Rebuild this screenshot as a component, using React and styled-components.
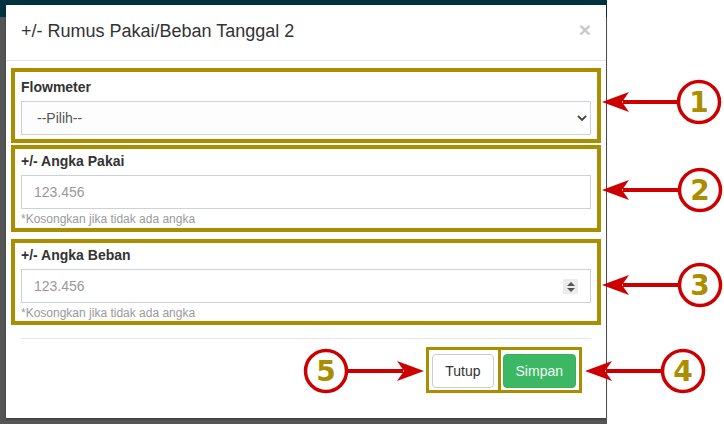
import React from "react";
import styled, { createGlobalStyle } from "styled-components";

const GlobalStyle = createGlobalStyle`
  html, body { margin: 0; padding: 0; background: #fff; }
  body {
    font-family: "Liberation Sans", Arial, sans-serif;
    font-size: 14px;
    color: #333;
  }
  * { box-sizing: border-box; }
`;

const Canvas = styled.div`
  position: relative;
  width: 724px;
  height: 424px;
  display: flex;
  overflow: hidden;
  background: #fff;
`;

const Backdrop = styled.div`
  width: 607px;
  height: 424px;
  padding: 5px 1px 0 6px;
  background: linear-gradient(#02323f 0 17px, #555 17px);
`;

const Modal = styled.div`
  width: 600px;
  height: 413px;
  background: #fff;
  display: flex;
  flex-direction: column;
  box-shadow: 0 1px 2px rgba(0, 0, 0, 0.35);
`;

const Header = styled.div`
  display: flex;
  align-items: flex-start;
  justify-content: space-between;
  padding: 14px 15px 16px;
  border-bottom: 1px solid #e5e5e5;
`;

const Title = styled.h4`
  margin: 0;
  font-size: 18px;
  line-height: 25px;
  font-weight: 400;
  color: #333;
`;

const Close = styled.button`
  border: none;
  background: none;
  padding: 0;
  margin-top: 0;
  font-family: "Liberation Sans", Arial, sans-serif;
  font-size: 21px;
  font-weight: 700;
  line-height: 21px;
  color: #c9c9c9;
  cursor: pointer;
`;

const Body = styled.div`
  padding: 7px 5px 0;
  display: flex;
  flex-direction: column;
`;

const Group = styled.div`
  border: 4px solid #aa8e00;
  padding: ${(p) => p.$pt}px 6px ${(p) => p.$pb}px;
  margin-top: ${(p) => p.$mt || 0}px;
`;

const Label = styled.label`
  display: block;
  font-weight: 700;
  font-size: 14px;
  line-height: 20px;
  margin-bottom: 4px;
  color: #333;
`;

const Field = styled.div`
  position: relative;
`;

const Input = styled.input`
  display: block;
  width: 100%;
  height: 34px;
  border: 1px solid #cdd2d8;
  border-radius: 0;
  padding: 0 12px;
  font-family: "Liberation Sans", Arial, sans-serif;
  font-size: 14px;
  color: #555;
  background: #fff;
  outline: none;
  &::placeholder { color: #999; }
`;

const Select = styled.select`
  display: block;
  width: 100%;
  height: 34px;
  border: 1px solid #cdd2d8;
  border-radius: 0;
  padding: 0 15px;
  appearance: none;
  font-family: "Liberation Sans", Arial, sans-serif;
  font-size: 14px;
  color: #555;
  background: #fdfdfd;
  outline: none;
`;

const Chevron = styled.svg`
  position: absolute;
  right: 4px;
  top: 14px;
  pointer-events: none;
`;

const Spinner = styled.span`
  position: absolute;
  right: 13px;
  top: 10px;
  width: 15px;
  height: 15px;
  background: #ececec;
  display: flex;
  flex-direction: column;
  align-items: center;
  justify-content: center;
  gap: 2px;
`;

const Tri = styled.span`
  width: 0;
  height: 0;
  border-left: 4px solid transparent;
  border-right: 4px solid transparent;
  ${(p) => (p.$up ? "border-bottom: 4px solid #555;" : "border-top: 4px solid #555;")}
`;

const Help = styled.span`
  display: block;
  margin-top: 3px;
  font-size: 12px;
  line-height: 14px;
  color: #9a9a9a;
`;

const Footer = styled.div`
  margin: 13px 15px 0;
  border-top: 1px solid #e5e5e5;
  padding: 8px 9px 0 0;
  display: flex;
  justify-content: flex-end;
`;

const Frame = styled.div`
  display: flex;
  border: 3px solid #aa8e00;
  ${(p) => (p.$joined ? "border-left: none;" : "")}
  padding: ${(p) => p.$pad};
`;

const Button = styled.button`
  height: 34px;
  padding: 0 12px;
  border: 1px solid ${(p) => (p.$primary ? "#36b15d" : "#ccc")};
  border-radius: 4px;
  background: ${(p) => (p.$primary ? "#3cb864" : "#fff")};
  color: ${(p) => (p.$primary ? "#f2fbf4" : "#333")};
  font-family: "Liberation Sans", Arial, sans-serif;
  font-size: 14px;
  cursor: pointer;
`;

const Overlay = styled.svg`
  position: absolute;
  left: 0;
  top: 0;
  pointer-events: none;
`;

const RED = "#cc0000";
const GOLD = "#aa8e00";

function Callout({ cx, cy, n, tip, dir }) {
  // arrow from the circle towards tip (x), horizontal at cy
  const s = dir === "left" ? 1 : -1;
  const head = `M${tip} ${cy} L${tip + s * 27} ${cy - 10} L${tip + s * 20} ${cy} L${tip + s * 27} ${cy + 10} Z`;
  const edge = cx - s * 21;
  return (
    <g>
      <line x1={tip + s * 21} y1={cy} x2={edge} y2={cy} stroke={RED} strokeWidth="4" />
      <path d={head} fill={RED} />
      <circle cx={cx} cy={cy} r="20.5" fill="#fff" stroke={RED} strokeWidth="3.5" />
      <text
        x={cx}
        y={cy + 10}
        textAnchor="middle"
        fontFamily="'DejaVu Sans', sans-serif"
        fontWeight="700"
        fontSize="28"
        fill={GOLD}
      >
        {n}
      </text>
    </g>
  );
}

export default function App() {
  return (
    <Canvas>
      <GlobalStyle />
      <Backdrop>
        <Modal>
          <Header>
            <Title>+/- Rumus Pakai/Beban Tanggal 2</Title>
            <Close>×</Close>
          </Header>
          <Body>
            <Group $pt={5} $pb={4}>
              <Label>Flowmeter</Label>
              <Field>
                <Select defaultValue="">
                  <option value="">--Pilih--</option>
                </Select>
                <Chevron width="10" height="6" viewBox="0 0 10 6">
                  <path d="M1 1 L5 5 L9 1" fill="none" stroke="#444" strokeWidth="1.8" />
                </Chevron>
              </Field>
            </Group>
            <Group $pt={2} $pb={2} $mt={2}>
              <Label>+/- Angka Pakai</Label>
              <Input placeholder="123.456" />
              <Help>*Kosongkan jika tidak ada angka</Help>
            </Group>
            <Group $pt={2} $pb={1} $mt={7}>
              <Label>+/- Angka Beban</Label>
              <Field>
                <Input placeholder="123.456" />
                <Spinner>
                  <Tri $up />
                  <Tri />
                </Spinner>
              </Field>
              <Help>*Kosongkan jika tidak ada angka</Help>
            </Group>
          </Body>
          <Footer>
            <Frame $pad="4px 4px 2px 3px">
              <Button>Tutup</Button>
            </Frame>
            <Frame $joined $pad="4px 3px 2px 2px">
              <Button $primary>Simpan</Button>
            </Frame>
          </Footer>
        </Modal>
      </Backdrop>
      <Overlay width="724" height="424" viewBox="0 0 724 424">
        <Callout cx={699} cy={102} n="1" tip={602} dir="left" />
        <Callout cx={700} cy={190} n="2" tip={602} dir="left" />
        <Callout cx={700} cy={285} n="3" tip={602} dir="left" />
        <Callout cx={683} cy={371} n="4" tip={585} dir="left" />
        <Callout cx={326} cy={371} n="5" tip={424} dir="right" />
      </Overlay>
    </Canvas>
  );
}
